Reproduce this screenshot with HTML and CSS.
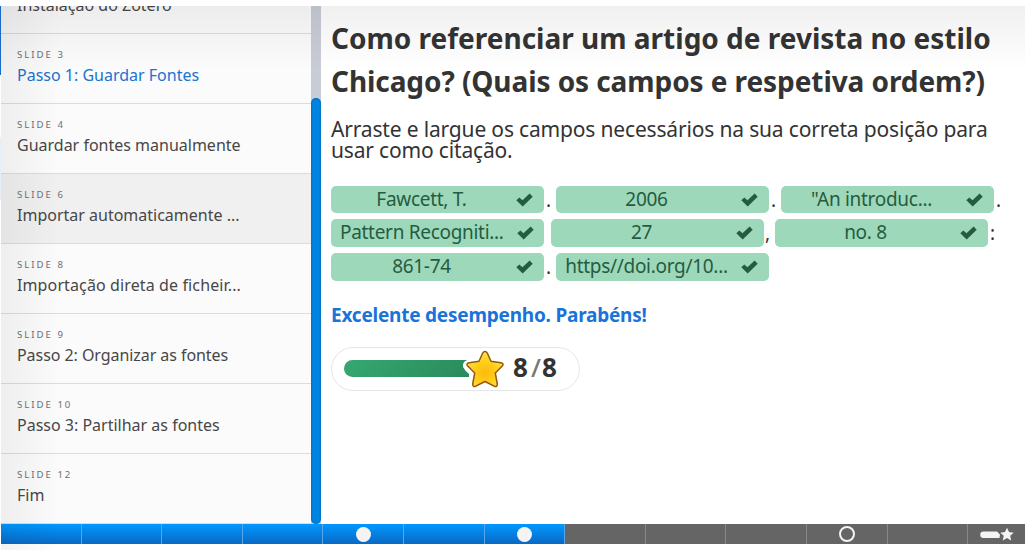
FILE: index.html
```html
<!DOCTYPE html>
<html lang="pt">
<head>
<meta charset="utf-8">
<title>Passo 1: Guardar Fontes</title>
<link rel="stylesheet" href="styles.css">
</head>
<body>
<div class="player">
  <main class="stage">
    <nav class="menu">
      <div class="item first"><span>Instalação do Zotero</span></div>
      <div class="item active"><b>SLIDE 3</b><span>Passo 1: Guardar Fontes</span></div>
      <div class="item"><b>SLIDE 4</b><span>Guardar fontes manualmente</span></div>
      <div class="item hover"><b>SLIDE 6</b><span>Importar automaticamente ...</span></div>
      <div class="item"><b>SLIDE 8</b><span class="wide">Importação direta de ficheir...</span></div>
      <div class="item"><b>SLIDE 9</b><span class="narrow">Passo 2: Organizar as fontes</span></div>
      <div class="item"><b>SLIDE 10</b><span>Passo 3: Partilhar as fontes</span></div>
      <div class="item"><b>SLIDE 12</b><span>Fim</span></div>
    </nav>
    <div class="track"><div class="thumb"></div></div>
    <section class="slide">
      <h1>Como referenciar um artigo de revista no estilo<br><span class="tight">Chicago? (Quais os campos e respetiva ordem?)</span></h1>
      <p class="task">Arraste e largue os campos necessários na sua correta posição para<br>usar como citação.</p>
      <div class="row"><div class="chip"><span>Fawcett, T.</span><svg class="check" viewBox="0 0 17 14"><path d="M0.300 7.200 3.300 4.400 6.500 7.300 13.600 .6 16.700 3.700 6.700 13.400Z"/></svg></div><i>.</i><div class="chip"><span>2006</span><svg class="check" viewBox="0 0 17 14"><path d="M0.300 7.200 3.300 4.400 6.500 7.300 13.600 .6 16.700 3.700 6.700 13.400Z"/></svg></div><i>.</i><div class="chip"><span>"An introduc...</span><svg class="check" viewBox="0 0 17 14"><path d="M0.300 7.200 3.300 4.400 6.500 7.300 13.600 .6 16.700 3.700 6.700 13.400Z"/></svg></div><i>.</i></div>
      <div class="row second"><div class="chip"><span>Pattern Recogniti...</span><svg class="check" viewBox="0 0 17 14"><path d="M0.300 7.200 3.300 4.400 6.500 7.300 13.600 .6 16.700 3.700 6.700 13.400Z"/></svg></div><i class="gap"></i><div class="chip"><span>27</span><svg class="check" viewBox="0 0 17 14"><path d="M0.300 7.200 3.300 4.400 6.500 7.300 13.600 .6 16.700 3.700 6.700 13.400Z"/></svg></div><i class="comma">,</i><div class="chip"><span>no. 8</span><svg class="check" viewBox="0 0 17 14"><path d="M0.300 7.200 3.300 4.400 6.500 7.300 13.600 .6 16.700 3.700 6.700 13.400Z"/></svg></div><i>:</i></div>
      <div class="row third"><div class="chip"><span>861-74</span><svg class="check" viewBox="0 0 17 14"><path d="M0.300 7.200 3.300 4.400 6.500 7.300 13.600 .6 16.700 3.700 6.700 13.400Z"/></svg></div><i>.</i><div class="chip"><span>https//doi.org/10...</span><svg class="check" viewBox="0 0 17 14"><path d="M0.300 7.200 3.300 4.400 6.500 7.300 13.600 .6 16.700 3.700 6.700 13.400Z"/></svg></div></div>
      <p class="feedback">Excelente desempenho. Parabéns!</p>
      <div class="score">
        <div class="meter"></div>
        <svg class="star" viewBox="0 0 44 44"><defs><radialGradient id="gold" cx=".5" cy=".6" r=".55"><stop offset="0" stop-color="#fcb90b"/><stop offset=".55" stop-color="#ffce1b"/><stop offset="1" stop-color="#ffdf4c"/></radialGradient></defs><path d="M4 13Q-1 15 0 20Q2 24 7 28V31H22V12Z" fill="#fff"/><path d="M22 4.500Q23.500 4.500 24.300 6L28 14.300 37.800 15.800Q41.200 16.500 39.500 18.700L32.300 26 34.300 37Q34.200 40.500 31.200 39.200L22 34.500 12.800 39.200Q9.800 40.500 9.700 37L11.700 26 4.500 18.700Q2.800 16.500 6.200 15.800L16 14.300 19.700 6Q20.500 4.500 22 4.500Z" fill="url(#gold)" stroke="#95580c" stroke-width="1.500" stroke-linejoin="round"/></svg>
        <div class="points"><span>8</span><em>/</em><span>8</span></div>
      </div>
    </section>
  </main>
  <footer class="progress">
    <div class="seg done"></div><div class="seg done"></div><div class="seg done"></div><div class="seg done"></div>
    <div class="seg done"><u class="dot"></u></div><div class="seg done"></div><div class="seg done"><u class="dot"></u></div>
    <div class="seg"></div><div class="seg"></div><div class="seg"></div><div class="seg"><u class="ring"></u></div><div class="seg"></div>
    <div class="seg last"><svg class="summary" viewBox="0 0 36 14"><path d="M4.500 4.500H18L21 7.500 20.500 11H4.500A3.200 3.200 0 0 1 4.500 4.500ZM28 .8 30 5.100 34.700 5.700 31.200 8.800 32.200 13.500 28 11.100 23.800 13.500 24.800 8.800 21.300 5.700 26 5.100Z"/></svg></div>
  </footer>
  <div class="shade-top"></div><div class="shade-left"></div>
</div>
</body>
</html>
```
FILE: styles.css
```css
* { box-sizing: border-box; }
body { margin: 0; background: #fff; font-family: "Noto Sans", "Open Sans", sans-serif; overflow: hidden; }
.player { position: relative; width: 1025px; height: 550px; padding: 6px 0 6px 1px; overflow: hidden; background: linear-gradient(#1a6ac8, #1a6ac8) 0 6px / 1px 69px no-repeat, linear-gradient(#e6eefa, #e6eefa) 0 137px / 1px 63px no-repeat #fff; }
.stage { display: flex; height: 518px; overflow: hidden; background: #fff; }
.menu { width: 310px; background: #fbfbfb; height: 518px; overflow: hidden; }
.item { display: flex; flex-direction: column; height: 70px; padding: 15px 16px 0; border-bottom: 1px solid #dcdcdc; color: #474747; font-size: 16px; line-height: 22px; white-space: nowrap; }
.first { height: 28px; padding-top: 0; }
.first span { margin-top: -12px; }
.item b { font-size: 9.6px; font-weight: 400; line-height: 12px; letter-spacing: 2px; color: #707070; margin-bottom: 3px; }
.item span { width: max-content; }
.item .wide { letter-spacing: .12px; }
.item .narrow { letter-spacing: -.06px; }
.active { color: #1a73d0; }
.hover { background: #f0f0f0; }
.track { width: 10px; background: #c8ccd6; padding-top: 92px; }
.thumb { height: 426px; border-radius: 5px; background: #0084e2; box-shadow: inset 0 0 3px #0060a8; }
.slide { flex: 1; padding: 11px 0 0 10px; color: #333; }
h1 { margin: 0; font-size: 28px; line-height: 43px; font-weight: 700; white-space: nowrap; }
.tight { letter-spacing: -.08px; }
.task { margin: 16px 0 25px; font-size: 21px; line-height: 21px; letter-spacing: -.17px; white-space: nowrap; }
.row { display: flex; height: 27px; margin-bottom: 6px; font-size: 19px; }
.second, .third { height: 28px; }
.chip { display: flex; align-items: center; width: 213px; height: 100%; padding: 0 11px 0 9px; border-radius: 5px; background: #9dd8bb; color: #255c41; line-height: 27px; letter-spacing: -.3px; white-space: nowrap; }
.chip span { flex: 1; text-align: center; margin-right: 13px; }
.check { flex: none; width: 17px; height: 14px; fill: #255c41; }
.second span, .third span { margin-top: -1px; }
.row i { width: 12px; font-style: normal; line-height: 29px; padding-left: 2px; color: #333; }
.row .gap { width: 7px; }
.row .comma { width: 11px; padding-left: 1px; }
.feedback { margin: 21px 0 19px; color: #1a73d9; font-size: 19px; line-height: 26px; letter-spacing: -.22px; font-weight: 700; }
.score { display: flex; align-items: center; width: 249px; height: 44px; padding-left: 12px; border: 1px solid #e6e6e6; border-radius: 22px; }
.meter { width: 125px; height: 17px; margin-top: -2px; border-radius: 9px 0 0 9px; background: linear-gradient(135deg, #36a870, #2a8a5c); }
.star { width: 44px; height: 44px; margin-left: -6px; }
.points { display: flex; margin: -5px 0 0 6px; font-size: 26px; line-height: 40px; font-weight: 700; }
.points em { font-style: normal; font-weight: 500; color: #777; padding: 0 1px 0 3px; }
.progress { display: flex; height: 20px; }
.seg { flex: none; width: 80.6px; display: flex; align-items: center; justify-content: center; background: #656565; border-right: 1px solid #888; }
.done { background: linear-gradient(#0098ff, #0a68c4); border-color: #55a6ec; }
.dot { width: 15px; height: 15px; border-radius: 50%; background: #f4f4f4; }
.ring { width: 16px; height: 16px; border-radius: 50%; border: 2px solid #f4f4f4; }
.last { width: 57px; border: 0; }
.summary { width: 36px; height: 14px; fill: #f4f4f4; }
.shade-top { position: absolute; left: 1px; right: 0; top: 6px; height: 64px; background: linear-gradient(rgba(0,0,0,.06), rgba(0,0,0,0)); }
.shade-left { position: absolute; left: 1px; top: 6px; bottom: 0; width: 60px; background: linear-gradient(90deg, rgba(0,0,0,.05), rgba(0,0,0,0)); }
```
